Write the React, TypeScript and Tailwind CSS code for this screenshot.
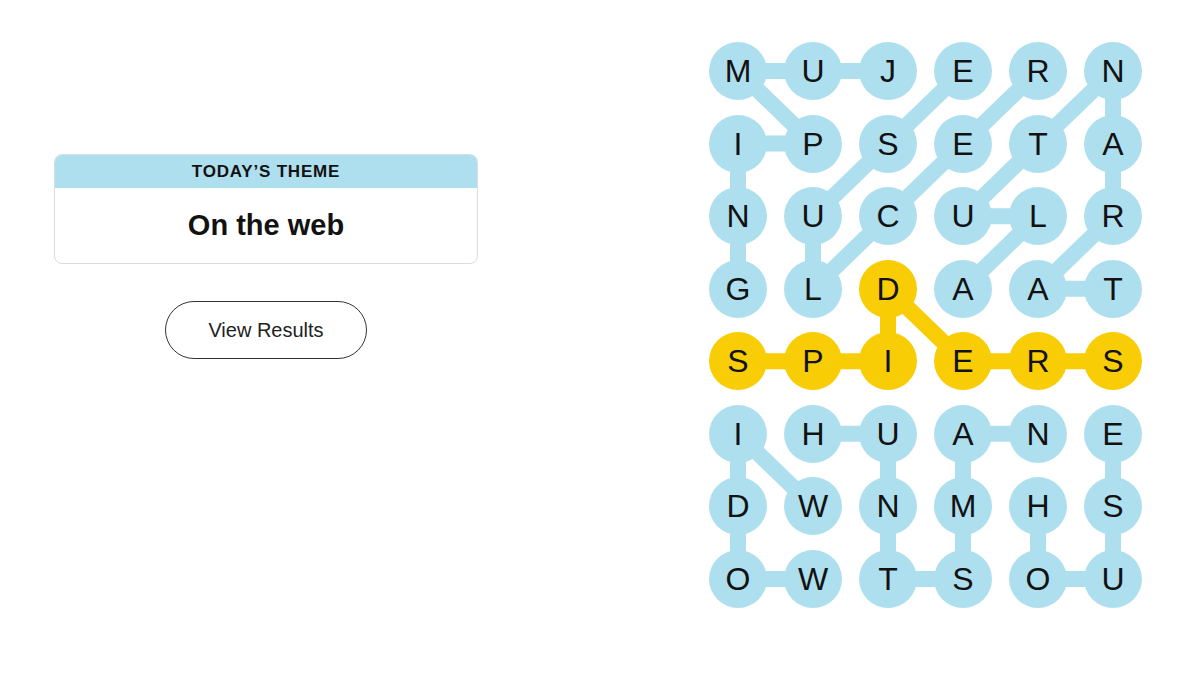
import React from "react";

const GRID = [
  "MUJERN",
  "IPSETA",
  "NUCULR",
  "GLDAAT",
  "SPIERS",
  "IHUANE",
  "DWNMHS",
  "OWTSOU",
];

const BLUE = "#aedfee";
const YELLOW = "#f8cd05";

type Link = [number, number, number, number];

const blueLinks: Link[] = [
  [0, 0, 0, 1], [0, 1, 0, 2], [0, 0, 1, 1], [1, 0, 1, 1], [1, 0, 2, 0], [2, 0, 3, 0],
  [0, 3, 1, 2], [1, 2, 2, 1], [2, 1, 3, 1],
  [0, 4, 1, 3], [1, 3, 2, 2], [2, 2, 3, 1],
  [0, 5, 1, 4], [1, 4, 2, 3], [2, 3, 2, 4], [2, 4, 3, 3],
  [0, 5, 1, 5], [1, 5, 2, 5], [2, 5, 3, 4], [3, 4, 3, 5],
  [5, 0, 6, 1], [5, 0, 6, 0], [6, 0, 7, 0], [7, 0, 7, 1],
  [5, 1, 5, 2], [5, 2, 6, 2], [6, 2, 7, 2], [7, 2, 7, 3], [7, 3, 6, 3], [6, 3, 5, 3], [5, 3, 5, 4],
  [5, 5, 6, 5], [6, 5, 7, 5], [7, 5, 7, 4], [7, 4, 6, 4],
];

const yellowLinks: Link[] = [
  [4, 0, 4, 1], [4, 1, 4, 2], [4, 2, 3, 2], [3, 2, 4, 3], [4, 3, 4, 4], [4, 4, 4, 5],
];

const yellowCells = new Set(["4-0", "4-1", "4-2", "3-2", "4-3", "4-4", "4-5"]);

const cx = (c: number) => 29 + 75 * c;
const cy = (r: number) => 29 + 72.57 * r;

export default function App() {
  return (
    <div
      className="w-[1200px] h-[675px] bg-white flex items-start"
      style={{ fontFamily: '"Liberation Sans", Arial, sans-serif' }}
    >
      <div className="ml-[54px] mt-[154px] w-[424px] flex flex-col items-center">
        <div className="w-full rounded-[8px] border border-[#dcdcdc] overflow-hidden">
          <div className="h-[33px] bg-[#aedfee] flex items-center justify-center">
            <span className="text-[17px] font-bold tracking-[0.8px] text-[#121212] leading-none">
              TODAY’S THEME
            </span>
          </div>
          <div className="h-[75px] flex items-center justify-center">
            <span className="text-[29px] font-bold text-[#121212] leading-none">On the web</span>
          </div>
        </div>
        <button className="mt-[37px] w-[202px] h-[58px] rounded-full border border-[#333] bg-white text-[20px] text-[#222] flex items-center justify-center">
          View Results
        </button>
      </div>

      <div className="ml-[231px] mt-[42px] relative w-[433px] h-[566px]">
        <svg className="absolute inset-0" width="433" height="566" viewBox="0 0 433 566">
          {blueLinks.map(([r1, c1, r2, c2], i) => (
            <line key={"b" + i} x1={cx(c1)} y1={cy(r1)} x2={cx(c2)} y2={cy(r2)} stroke={BLUE} strokeWidth={16} />
          ))}
          {yellowLinks.map(([r1, c1, r2, c2], i) => (
            <line key={"y" + i} x1={cx(c1)} y1={cy(r1)} x2={cx(c2)} y2={cy(r2)} stroke={YELLOW} strokeWidth={16} />
          ))}
        </svg>
        <div className="relative grid grid-cols-[repeat(6,58px)] gap-x-[17px] gap-y-[14.57px]">
          {GRID.map((row, r) =>
            row.split("").map((ch, c) => (
              <div
                key={r + "-" + c}
                className={
                  "w-[58px] h-[58px] rounded-full flex items-center justify-center text-[32px] text-[#121212] leading-none " +
                  (yellowCells.has(r + "-" + c) ? "bg-[#f8cd05]" : "bg-[#aedfee]")
                }
              >
                {ch}
              </div>
            ))
          )}
        </div>
      </div>
    </div>
  );
}
